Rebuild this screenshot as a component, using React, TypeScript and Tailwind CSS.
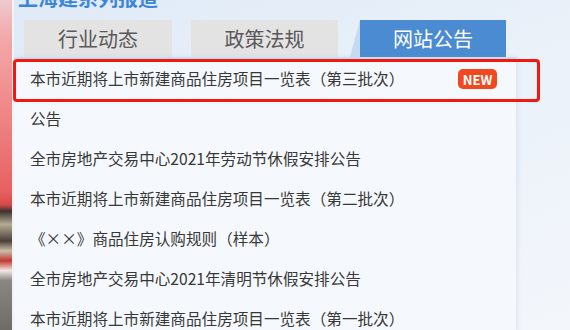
export default function App() {
  const items = [
    "本市近期将上市新建商品住房项目一览表（第三批次）",
    "公告",
    "全市房地产交易中心2021年劳动节休假安排公告",
    "本市近期将上市新建商品住房项目一览表（第二批次）",
    "《××》商品住房认购规则（样本）",
    "全市房地产交易中心2021年清明节休假安排公告",
    "本市近期将上市新建商品住房项目一览表（第一批次）",
  ];

  return (
    <div
      className="relative flex h-[330px] w-[570px] overflow-hidden bg-[linear-gradient(160deg,#dfeaf7_0%,#eaf1f9_45%,#f3f6fb_100%)]"
      style={{ fontFamily: '"Noto Sans CJK SC", "Noto Sans", sans-serif' }}
    >
      {/* banner image strip on the left */}
      <div className="w-[12px] shrink-0 bg-[linear-gradient(180deg,#eec9cd_0%,#f3a7a9_12%,#ef8585_35%,#e86060_58%,#d94848_62%,#3b3330_64%,#b5ab92_68%,#4a403a_73%,#c9bda8_76%,#c23a32_79%,#f2e6e2_82%,#8a8682_85%,#6f6b68_100%)]" />
      <div className="w-[2px] shrink-0 bg-[#f1f4f9]" />

      <div className="flex min-h-0 flex-1 flex-col">
        {/* cut-off section title */}
        <div className="h-[20px] shrink-0 overflow-hidden pl-[4px]">
          <div className="-mt-[12px] text-[20px] font-bold leading-[20px] text-[#3d85d6]">
            上海建系列报道
          </div>
        </div>

        {/* tabs */}
        <div className="flex h-[37px] shrink-0 items-stretch">
          <div className="ml-[10px] flex w-[148px] items-center justify-center bg-[#e3e3e3] text-[20px] text-[#595959]">
            行业动态
          </div>
          <div className="ml-[19px] flex w-[147px] items-center justify-center bg-[#e3e3e3] text-[20px] text-[#595959]">
            政策法规
          </div>
          <div className="ml-[12px] w-[10px] bg-[#c5daf0] [clip-path:polygon(100%_0,100%_100%,0_100%)]" />
          <div className="flex w-[146px] items-center justify-center bg-[#4a8bd1] text-[20px] text-white">
            网站公告
          </div>
        </div>

        {/* list panel */}
        <div className="w-[502px] flex-1 border-t-2 border-[#c9dcf1] bg-[#f5f8fc] shadow-[2px_0_4px_rgba(150,170,200,0.18)]">
          {items.map((t, i) => (
            <div
              key={i}
              className="flex h-[40px] items-center justify-between pl-[16px] pr-[19px] text-[15.6px] text-[#383838]"
            >
              <span className="whitespace-nowrap">{t}</span>
              {i === 0 && (
                <span className="flex h-[20px] w-[39px] items-center justify-center rounded-[5px] bg-[#f2481f] text-[13px] font-bold leading-none text-white">
                  NEW
                </span>
              )}
            </div>
          ))}
        </div>
      </div>

      {/* red highlight frame */}
      <div className="pointer-events-none absolute left-[13px] top-[59px] h-[43px] w-[527px] rounded-[4px] border-[3px] border-[#f2170f]" />
    </div>
  );
}
